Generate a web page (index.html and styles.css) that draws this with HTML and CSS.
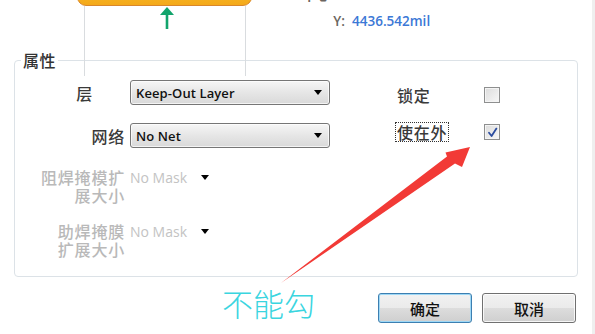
FILE: index.html
```html
<!DOCTYPE html>
<html lang="zh">
<head>
<meta charset="utf-8">
<title>属性</title>
<link rel="stylesheet" href="styles.css">
</head>
<body>
<div class="page">
  <div class="top">
    <div class="coords">
      <span class="k">中心 X:</span><span class="v">5045.287mil</span>
      <span class="k">Y:</span><span class="v">4436.542mil</span>
    </div>
  </div>

  <fieldset class="props">
    <legend>属性</legend>
    <div class="props-body">
      <div class="col-left">
        <div class="row">
          <span class="lbl lbl-layer">层</span>
          <div class="select"><span class="sel-text">Keep-Out Layer</span><i class="caret"></i></div>
        </div>
        <div class="row row-gap">
          <span class="lbl">网络</span>
          <div class="select"><span class="sel-text">No Net</span><i class="caret"></i></div>
        </div>
        <div class="row mask first-mask">
          <span class="lbl dis">阻焊掩模扩<br>展大小</span>
          <div class="mask-ctl"><span class="mask-text">No Mask</span><i class="caret"></i></div>
        </div>
        <div class="row mask second-mask">
          <span class="lbl dis">助焊掩膜<br>扩展大小</span>
          <div class="mask-ctl"><span class="mask-text">No Mask</span><i class="caret"></i></div>
        </div>
      </div>
      <div class="col-right">
        <div class="crow">
          <span class="clbl">锁定</span>
          <span class="cbox"></span>
        </div>
        <div class="crow crow-2">
          <span class="clbl"><span class="focus">使在外</span></span>
          <span class="cbox"><svg viewBox="0 0 13 13" width="13" height="13"><path d="M3 6.8 L5.6 10 L10.4 2.6" fill="none" stroke="#2b4c9f" stroke-width="1.8" stroke-linecap="round" stroke-linejoin="round"/></svg></span>
        </div>
      </div>
    </div>
  </fieldset>

  <div class="buttons">
    <button class="btn btn-default">确定</button>
    <button class="btn">取消</button>
  </div>

  <div class="diagram">
    <div class="orange"></div>
    <div class="vline vline-l"></div>
    <div class="vline vline-r"></div>
    <svg class="green-arrow" viewBox="0 0 16 24" width="16" height="24">
      <path d="M8 1 L15 9 L9.3 9 L9.3 23 L6.7 23 L6.7 9 L1 9 Z" fill="#12a46c"/>
    </svg>
  </div>

  <svg class="red-arrow" viewBox="0 0 595 334" width="595" height="334">
    <polygon points="281,283 447,156.5 445.5,152.5 470,147 462,167 455,163.5" fill="#f23a36"/>
  </svg>
  <div class="note">不能勾</div>
  <div class="edge"></div>
</div>
</body>
</html>
```

FILE: styles.css
```css
html, body {
  margin: 0;
  padding: 0;
  background: #ffffff;
}

.page {
  position: relative;
  width: 595px;
  height: 334px;
  overflow: hidden;
  background: #ffffff;
  font-family: "Noto Sans CJK SC", "Open Sans", sans-serif;
  color: #333333;
}

.top {
  height: 49px;
  display: flex;
}

.coords {
  margin-left: 290px;
  margin-top: -17px;
  height: 51px;
  display: grid;
  grid-template-columns: 55px auto;
  column-gap: 7px;
  grid-auto-rows: 25.5px;
  line-height: 25.5px;
  font-family: "Open Sans", sans-serif;
  font-size: 13.5px;
  font-weight: 600;
}

.coords .k {
  text-align: right;
  color: #6b6660;
  font-family: "Open Sans", "Noto Sans CJK SC", sans-serif;
}

.coords .v {
  color: #3b78d6;
}

/* properties group */
.props {
  margin: 0 0 0 14px;
  width: 564px;
  height: 228px;
  box-sizing: border-box;
  border: 1px solid #dce2e7;
  border-radius: 4px;
  padding: 0;
  min-width: 0;
}

.props legend {
  margin-left: 6px;
  padding: 0 2px;
  font-size: 16px;
  font-weight: 500;
  line-height: 22px;
  color: #333333;
  letter-spacing: 0.5px;
}

.props-body {
  display: flex;
}

.col-left {
  width: 315px;
  padding-top: 9px;
  display: flex;
  flex-direction: column;
}

.row {
  display: flex;
  align-items: center;
  gap: 5px;
}

.row-gap {
  margin-top: 18px;
}

.lbl {
  width: 110px;
  flex: none;
  box-sizing: border-box;
  text-align: right;
  font-size: 16px;
  font-weight: 500;
  letter-spacing: 0.8px;
  color: #3a3a3a;
  line-height: 20px;
}

.lbl-layer {
  padding-right: 32px;
}

.lbl.dis {
  color: #b9b9b9;
  line-height: 17.5px;
}

.select {
  width: 200px;
  height: 25px;
  box-sizing: border-box;
  border: 1px solid #767676;
  border-radius: 3px;
  background: linear-gradient(#f6f6f6, #e6e6e6 50%, #d9d9d9);
  box-shadow: inset 0 0 0 1px rgba(255, 255, 255, 0.7);
  display: flex;
  align-items: center;
  padding: 0 7px 0 5px;
}

.sel-text {
  flex: 1;
  font-family: "Open Sans", sans-serif;
  font-size: 13px;
  font-weight: 600;
  color: #111111;
  letter-spacing: 0.1px;
}

.caret {
  width: 0;
  height: 0;
  border-left: 4.5px solid transparent;
  border-right: 4.5px solid transparent;
  border-top: 5px solid #000000;
}

.mask {
  align-items: flex-start;
}

.first-mask {
  margin-top: 21px;
}

.second-mask {
  margin-top: 19px;
}

.mask-ctl {
  display: flex;
  align-items: center;
  gap: 14px;
  height: 17.5px;
}

.mask-text {
  font-family: "Open Sans", sans-serif;
  font-size: 14px;
  color: #c3c3c3;
  line-height: 17.5px;
}

/* right column */
.col-right {
  margin-left: 65px;
  padding-top: 14px;
  display: flex;
  flex-direction: column;
}

.crow {
  display: flex;
  align-items: center;
  height: 20px;
}

.crow-2 {
  margin-top: 17px;
}

.clbl {
  width: 89px;
  font-size: 16px;
  font-weight: 500;
  letter-spacing: 0.8px;
  color: #3a3a3a;
  line-height: 20px;
  padding-left: 2px;
  box-sizing: border-box;
}

.crow-2 .clbl {
  padding-left: 0;
}

.focus {
  display: inline-block;
  border: 1px dotted #333333;
  padding: 0 1px;
  line-height: 18px;
}

.cbox {
  width: 16px;
  height: 16px;
  box-sizing: border-box;
  border: 1px solid #8e8f8f;
  background: linear-gradient(135deg, #dcdcdc, #f7f7f7);
  box-shadow: inset 0 0 0 1px #f4f4f4;
  display: flex;
  align-items: center;
  justify-content: center;
}

/* buttons */
.buttons {
  display: flex;
  justify-content: flex-end;
  gap: 10px;
  margin-top: 16px;
  padding-right: 19px;
}

.btn {
  width: 94px;
  height: 30px;
  box-sizing: border-box;
  border: 1px solid #707070;
  border-radius: 3px;
  background: linear-gradient(#f2f2f2, #ebebeb 50%, #dddddd 50%, #cfcfcf);
  box-shadow: inset 0 0 0 1px rgba(255, 255, 255, 0.8);
  font-family: "Noto Sans CJK SC", sans-serif;
  font-size: 15px;
  font-weight: 500;
  color: #111111;
  padding: 0;
}

.btn-default {
  border-color: #3c7fb1;
  box-shadow: inset 0 0 0 1px #9ed8f6;
}

/* background diagram */
.diagram {
  position: absolute;
  left: 0;
  top: 0;
  width: 300px;
  height: 80px;
  pointer-events: none;
}

.orange {
  position: absolute;
  left: 77px;
  top: -20px;
  width: 175px;
  height: 26px;
  box-sizing: border-box;
  border: 1.5px solid #d9872b;
  border-radius: 9px;
  background: linear-gradient(#f9c02a, #f4a91a);
}

.vline {
  position: absolute;
  top: 6px;
  width: 1px;
  height: 70px;
  background: #d9dcdf;
}

.vline-l { left: 84px; }
.vline-r { left: 245px; }

.green-arrow {
  position: absolute;
  left: 159px;
  top: 6px;
}

.red-arrow {
  position: absolute;
  left: 0;
  top: 0;
  pointer-events: none;
}

.note {
  position: absolute;
  left: 222px;
  top: 287px;
  font-family: "Noto Sans CJK SC", sans-serif;
  font-weight: 300;
  font-size: 31px;
  line-height: 31px;
  color: #3ad5df;
}

.edge {
  position: absolute;
  right: 0;
  top: 0;
  width: 3px;
  height: 334px;
  background: #efefef;
}
```
